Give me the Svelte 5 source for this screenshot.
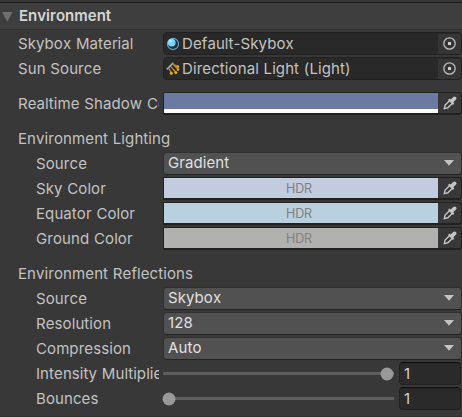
<script>
  const groups = [
    { rows: [
      { label: 'Skybox Material', type: 'object', value: 'Default-Skybox', icon: 'sphere' },
      { label: 'Sun Source', type: 'object', value: 'Directional Light (Light)', icon: 'light' }
    ] },
    { rows: [{ label: 'Realtime Shadow Color', type: 'color', color: '#6b7aa3', alpha: true }] },
    { title: 'Environment Lighting', rows: [
      { label: 'Source', type: 'select', value: 'Gradient' },
      { label: 'Sky Color', type: 'color', color: '#c3cbde' },
      { label: 'Equator Color', type: 'color', color: '#b9d1df' },
      { label: 'Ground Color', type: 'color', color: '#b1b1af' }
    ] },
    { title: 'Environment Reflections', rows: [
      { label: 'Source', type: 'select', value: 'Skybox' },
      { label: 'Resolution', type: 'select', value: '128' },
      { label: 'Compression', type: 'select', value: 'Auto' },
      { label: 'Intensity Multiplier', type: 'slider', value: '1', position: 100 },
      { label: 'Bounces', type: 'slider', value: '1', position: 0 }
    ] }
  ];
</script>

<main>
  <header>
    <svg width="11" height="10" viewBox="0 0 11 10"><path d="M0 0H10.5L5.25 9.5Z" fill="#707070" /></svg>
    <h1>Environment</h1>
  </header>
  {#each groups as group}
    <section>
      {#if group.title}<div class="row"><h2>{group.title}</h2></div>{/if}
      {#each group.rows as row}
        <div class="row">
          <span class="label" class:nested={group.title}>{row.label}</span>
          {#if row.type === 'object'}
            <div class="field object">
              <svg class="type" width="14" height="14" viewBox="0 0 14 14">
                {#if row.icon === 'sphere'}
                  <circle cx="7" cy="7" r="5.6" fill="#1d3440" stroke="#62a9c9" stroke-width="1.1" />
                  <circle cx="5.7" cy="5.6" r="3.9" fill="#79d2fb" />
                  <circle cx="4.6" cy="4.3" r="1.7" fill="#a4e6ff" />
                {:else}
                  <path d="M.8 7.4L7.3 .9" stroke="#a8a8a8" stroke-width="1.6" />
                  <path d="M2.8 6.6L5.3 10.5M4.8 4.6L9.7 10M7 2.4L12 7.4M7 2.4L11.7 4.4" stroke="#c08b18" stroke-width="1.3" />
                  <g fill="#e9ab15"><circle cx="5.3" cy="11.2" r="1.5" /><circle cx="9.8" cy="10.6" r="1.5" /><circle cx="11.8" cy="4.6" r="1.4" /><circle cx="12" cy="7.6" r="1.3" /></g>
                {/if}
              </svg>
              <span class="value">{row.value}</span>
              <div class="pick">
                <svg width="13" height="13" viewBox="0 0 13 13"><circle cx="6.5" cy="6.5" r="5.7" fill="none" stroke="#bdbdbd" stroke-width="1.3" /><rect x="5" y="5" width="3" height="3" rx=".5" fill="#d0d0d0" /></svg>
              </div>
            </div>
          {:else if row.type === 'color'}
            <div class="field color">
              <div class="swatch" style:background={row.color}>
                {#if row.alpha}<i></i>{:else}HDR{/if}
              </div>
              <div class="dropper">
                <svg width="14" height="14" viewBox="0 0 14 14">
                  <path d="M6.5 4.7L2.1 9.1L1.3 12.6L4.8 11.8L9.2 7.4" fill="none" stroke="#c4c4c4" stroke-width="1.4" />
                  <path d="M5 4.1L6.5 2.6L7.7 3.6L10 1.2Q11.6 -.3 12.9 1Q14.2 2.3 12.8 3.8L10.3 6.2L11.4 7.4L9.9 8.9Z" fill="#c4c4c4" />
                </svg>
              </div>
            </div>
          {:else if row.type === 'select'}
            <div class="field select">
              <span class="value">{row.value}</span>
              <svg width="10" height="6" viewBox="0 0 10 6"><path d="M0 0H10L5 5.8Z" fill="#c4c4c4" /></svg>
            </div>
          {:else}
            <div class="slider">
              <div class="track"><b style:left="{row.position}%"></b></div>
              <div class="number">{row.value}</div>
            </div>
          {/if}
        </div>
      {/each}
    </section>
  {/each}
</main>

<style>
  :global(body) { margin: 0; background: #383838; }
  main {
    box-sizing: border-box;
    width: 462px;
    height: 417px;
    overflow: hidden;
    padding-top: 2px;
    background: #383838;
    border-bottom: 1px solid #303030;
    color: #c2c2c2;
    font: 15px/23px Inter, sans-serif;
    font-kerning: none;
    letter-spacing: 0.09px;
    word-spacing: 0.4px;
  }
  header {
    box-sizing: border-box;
    display: flex;
    align-items: center;
    height: 28px;
    padding-left: 2px;
    gap: 6px;
    background: #3e3e3e;
    border-top: 1px solid #1a1a1a;
    border-bottom: 1px solid #303030;
  }
  header svg { margin-top: 1px; }
  h1, h2 { margin: 0; font-size: 15px; }
  h1 { font-weight: 600; color: #d6d6d6; margin-top: -1px; letter-spacing: 0; }
  h2 { font-weight: 400; padding-left: 18px; line-height: 24px; }
  section { padding-top: 2px; }
  section + section { padding-top: 10px; }
  .row { display: flex; height: 23px; margin-bottom: 2px; white-space: nowrap; }
  .label { box-sizing: border-box; width: 159px; margin-right: 4px; padding-left: 18px; overflow: hidden; flex: none; line-height: 24px; }
  .label.nested { padding-left: 36px; }
  .field { box-sizing: border-box; display: flex; width: 298.5px; height: 23px; overflow: hidden; border: 1px solid #212121; border-radius: 3px; }
  .object { align-items: center; background: #292929; border-radius: 4px; }
  .type { margin-left: 2px; }
  .object .value { flex: 1; margin-left: 2px; line-height: 23px; }
  .pick { display: flex; align-items: center; justify-content: center; width: 23px; height: 20px; background: #353535; }
  .pick svg { margin: -1px 0 0 1px; }
  .color { border-radius: 1px 4px 4px 1px; border-bottom-width: 2px; }
  .swatch { box-sizing: border-box; display: flex; align-items: flex-end; justify-content: center; width: 274px; height: 20px; color: #808080; font-size: 12.5px; line-height: 19px; letter-spacing: -0.1px; }
  .swatch:not(:has(i)) { padding-right: 4px; }
  .swatch i { width: 100%; height: 4px; background: #fff; }
  .dropper { display: flex; align-items: center; justify-content: center; flex: 1; }
  .dropper svg { margin: -1px 0 0 2px; }
  .select { align-items: center; justify-content: space-between; padding: 0 6.5px 0 4px; background: #515151; border-color: #303030 #303030 #242424; border-radius: 4px; color: #e0e0e0; }
  .select svg { margin-top: -1px; }
  .select .value { line-height: 21px; margin-top: -2px; }
  .slider { display: flex; width: 299px; }
  .track { position: relative; width: 218px; height: 3px; margin: 10px 7px 0 6px; background: #5e5e5e; box-shadow: -6px 0 #5e5e5e, 7px 0 #5e5e5e; }
  .track b { position: absolute; top: 1.5px; width: 13px; height: 13px; border-radius: 50%; background: #999; transform: translate(-50%, -50%); }
  .number { box-sizing: border-box; width: 62px; height: 23px; margin-left: 5px; padding-left: 4px; line-height: 22px; background: #2a2a2a; border: 1px solid #212121; border-top-color: #0d0d0d; border-radius: 4px; color: #d2d2d2; }
</style>
